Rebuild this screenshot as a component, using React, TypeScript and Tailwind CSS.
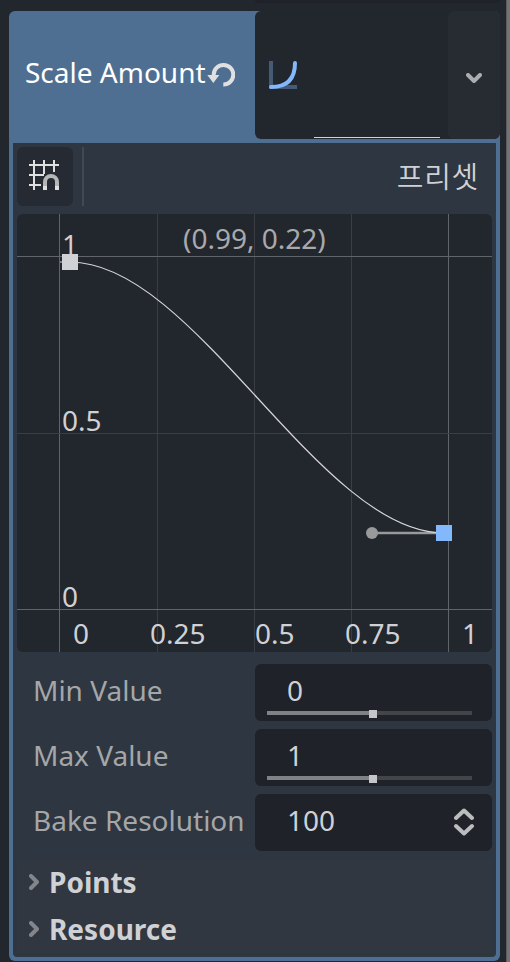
import { useState } from 'react';
import type { ReactNode } from 'react';

const xTicks = [
  { label: '0', line: 59.5, text: 73, strong: true },
  { label: '0.25', line: 157.5, text: 150, strong: false },
  { label: '0.5', line: 254.5, text: 255, strong: false },
  { label: '0.75', line: 351.5, text: 345, strong: false },
  { label: '1', line: 448.5, text: 462, strong: true },
];

const yTicks = [
  { label: '1', line: 256.5, text: 255, strong: true },
  { label: '0.5', line: 433.5, text: 431, strong: false },
  { label: '0', line: 609.5, text: 607, strong: true },
];

const sections = ['Points', 'Resource'];

function ReloadIcon() {
  return (
    <svg width="28" height="28" viewBox="0 0 28 28" className="shrink-0">
      <path d="M6.7 14.5 V13.5 A9.8 9.8 0 1 1 16.3 23.5" fill="none" stroke="#e0e0e0" strokeWidth="4" />
      <path d="M0.3 14 H12.3 L6.3 22 Z" fill="#e0e0e0" />
    </svg>
  );
}

function CurveIcon() {
  return (
    <svg width="28" height="28" viewBox="0 0 28 28">
      <path d="M2 0 V26 H28" fill="none" stroke="#455a78" strokeWidth="4" />
      <path d="M2 26 C18 26 26 18 26 2" fill="none" stroke="#84b8fc" strokeWidth="4" strokeLinecap="round" />
    </svg>
  );
}

function SnapIcon() {
  return (
    <svg width="30" height="30" viewBox="0 0 30 30">
      <path d="M5 0 V30 M15 0 V14 M25 0 V12 M0 5 H30 M0 15 H15 M0 25 H12" fill="none" stroke="#e0e0e0" strokeWidth="2" />
      <path d="M16 26 V22 A6 6 0 0 1 28 22 V26" fill="none" stroke="#b5b6b8" strokeWidth="4" />
      <path d="M14 26 H18 V30 H14 Z M26 26 H30 V30 H26 Z" fill="#e0e0e0" />
    </svg>
  );
}

function PropertyRow({ label, children }: { label: string; children: ReactNode }) {
  return (
    <div className="flex h-[57px]">
      <span className="w-[238px] shrink-0 pl-4 leading-[52px] whitespace-nowrap text-[#a5a6a8]">{label}</span>
      <div className="flex-1 rounded-md bg-[#1f2229] text-[#d0d1d4]">{children}</div>
    </div>
  );
}

function SliderField({ value }: { value: number }) {
  return (
    <div className="flex h-full flex-col px-3">
      <span className="h-[46px] pl-5 leading-[52px]">{value}</span>
      <div className="mt-px flex h-2 w-[205px] items-start">
        <div className="h-1 w-[102px] bg-[#808285]" />
        <div className="-mt-px h-2 w-2 bg-[#c4c5c8]" />
        <div className="h-1 flex-1 bg-[#444548]" />
      </div>
    </div>
  );
}

function CurveGraph() {
  return (
    <svg width="475" height="438" viewBox="17 214 475 438" className="mt-2 block rounded-md bg-[#22262d]" fontSize="28">
      <g shapeRendering="crispEdges">
        {xTicks.map(({ label, line, strong }) => (
          <path key={label} d={`M${line} 214 V652`} stroke={strong ? '#616468' : '#3a3d43'} />
        ))}
        {yTicks.map(({ label, line, strong }) => (
          <path key={label} d={`M17 ${line} H492`} stroke={strong ? '#616468' : '#3a3d43'} />
        ))}
      </g>
      <g fill="#d0d1d4">
        {xTicks.map(({ label, text }) => (
          <text key={label} x={text} y="644">{label}</text>
        ))}
        {yTicks.map(({ label, text }) => (
          <text key={label} x="62" y={text}>{label}</text>
        ))}
      </g>
      <text x="183" y="249" fill="#a8a9ac">(0.99, 0.22)</text>
      <path d="M372 533 H444" stroke="#999a9b" strokeWidth="2.5" />
      <path d="M60 262 H70 C194.7 262 319.3 533 444 533" fill="none" stroke="#d4d5d7" strokeWidth="1.2" />
      <circle cx="372" cy="533" r="6" fill="#999a9b" />
      <rect x="62" y="254" width="16" height="16" fill="#d0d1d4" />
      <rect x="436" y="525" width="16" height="16" fill="#84b8fc" />
    </svg>
  );
}

export default function App() {
  const [snap, setSnap] = useState(false);

  return (
    <div className="flex h-[962px] w-[510px] overflow-hidden bg-[#22262d] font-['Noto_Sans','Noto_Sans_CJK_KR',sans-serif] text-[28px]">
      <main className="ml-[9px] w-[491px]">
        <div className="ml-[246px] h-[3px] rounded-b-md bg-[#1f2229]" />
        <section className="mt-2 h-[950px] rounded-md bg-[#4f6f92]">
          <header className="flex h-[132px]">
            <div className="flex h-32 w-[246px] shrink-0 items-center pl-4 text-white">
              <span className="w-[182px] pb-1.5 whitespace-nowrap">Scale Amount</span>
              <ReloadIcon />
            </div>
            <button type="button" className="flex h-32 flex-1 overflow-hidden rounded-md bg-[#22262d]">
              <span className="flex h-full w-[59px] items-center pl-3.5"><CurveIcon /></span>
              <span className="mt-[126px] h-px w-[126px] bg-[#d2d3d5]" />
              <span className="ml-2 flex h-full w-[52px] items-center justify-center rounded-md bg-[#272b32]">
                <svg width="16" height="10" viewBox="0 0 16 10" className="mt-1.5">
                  <path d="M2 2 L8 8 L14 2" fill="none" stroke="#acadb0" strokeWidth="4" strokeLinecap="round" strokeLinejoin="round" />
                </svg>
              </span>
            </button>
          </header>

          <div className="mx-1 h-[814px] rounded-b-sm bg-[#2d3641] px-1 pt-1">
            <div className="flex h-[59px]">
              <button
                type="button"
                onClick={() => setSnap(!snap)}
                className={`flex w-14 items-start rounded-md pt-[13px] pl-3 ${snap ? 'bg-[#39455a]' : 'bg-[#262a32]'}`}
              >
                <SnapIcon />
              </button>
              <div className="ml-[9px] w-0.5 bg-[#414953]" />
              <span className="ml-auto pr-[13px] font-['Noto_Sans_CJK_KR',sans-serif] text-[29px] leading-[56px] font-[350] tracking-[0.7px] text-[#d0d1d4]">프리셋</span>
            </div>

            <CurveGraph />

            <div className="mt-3 flex flex-col gap-2">
              <PropertyRow label="Min Value"><SliderField value={0} /></PropertyRow>
              <PropertyRow label="Max Value"><SliderField value={1} /></PropertyRow>
              <PropertyRow label="Bake Resolution">
                <div className="flex h-full items-start justify-between pr-[18px] pl-8">
                  <span className="leading-[52px]">100</span>
                  <svg width="20" height="28" viewBox="0 0 20 28" className="mt-3.5">
                    <path d="M2 10 L10 2.5 L18 10 M2 18 L10 25.5 L18 18" fill="none" stroke="#bbbcbe" strokeWidth="4" strokeLinecap="round" strokeLinejoin="round" />
                  </svg>
                </div>
              </PropertyRow>
            </div>

            <div className="mt-2 h-[94px] bg-[#313740]">
              {sections.map((title) => (
                <div key={title} className="flex h-[47px] items-start pl-3">
                  <svg width="10" height="16" viewBox="0 0 10 16" className="mt-[15px]">
                    <path d="M2 2 L8 8 L2 14" fill="none" stroke="#82858c" strokeWidth="4" strokeLinecap="round" strokeLinejoin="round" />
                  </svg>
                  <span className="ml-2.5 leading-[46px] font-bold text-[#d0d1d4]">{title}</span>
                </div>
              ))}
            </div>
          </div>
        </section>
      </main>
      <div className="ml-1.5 flex-1 border-l border-[#5c5c5e] bg-[#737375]" />
    </div>
  );
}
